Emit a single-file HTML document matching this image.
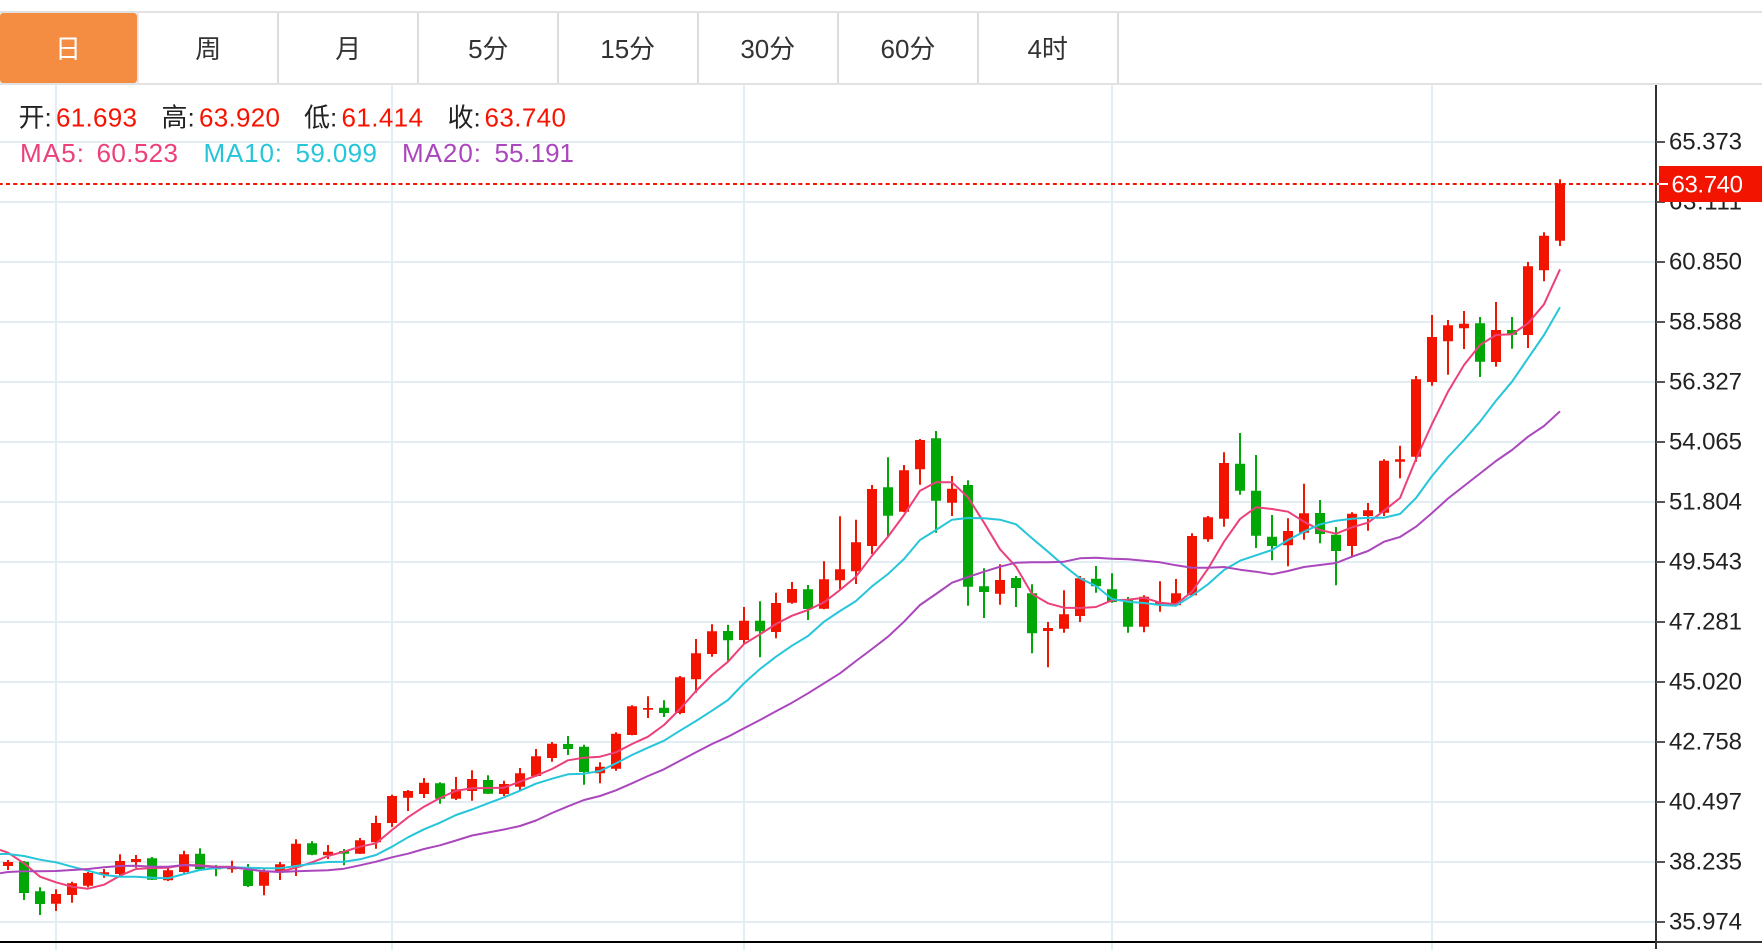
<!DOCTYPE html>
<html><head><meta charset="utf-8"><title>K线</title>
<style>
html,body{margin:0;padding:0;background:#fff;width:1762px;height:950px;overflow:hidden}
svg{display:block;font-family:"Liberation Sans","Noto Sans CJK SC",sans-serif}
</style></head><body>
<svg width="1762" height="950" viewBox="0 0 1762 950" xmlns="http://www.w3.org/2000/svg">
<rect width="1762" height="950" fill="#fff"/>
<!-- grid -->
<path fill="none" stroke="#E3EDF4" stroke-width="2" d="M0 142H1656M0 202H1656M0 262H1656M0 322H1656M0 382H1656M0 442H1656M0 502H1656M0 562H1656M0 622H1656M0 682H1656M0 742H1656M0 802H1656M0 862H1656M0 922H1656M56 85V950M392 85V950M744 85V950M1112 85V950M1432 85V950"/>
<!-- tabs -->
<rect x="0" y="11" width="1762" height="2" fill="#E2E2E2"/>
<rect x="0" y="83" width="1762" height="2" fill="#E2E2E2"/>
<rect x="137" y="13" width="2" height="70" fill="#E6E6E6"/>
<path fill="#DCDCDC" d="M277 13h2v70h-2zM417 13h2v70h-2zM557 13h2v70h-2zM697 13h2v70h-2zM837 13h2v70h-2zM977 13h2v70h-2zM1117 13h2v70h-2z"/>
<rect x="0" y="13" width="137" height="70" rx="3" fill="#F48C42"/>
<g font-size="26" text-anchor="middle" fill="#333">
<text x="68" y="58" fill="#fff">日</text>
<text x="208.300" y="58">周</text>
<text x="348.300" y="58">月</text>
<text x="488.300" y="58">5分</text>
<text x="627.700" y="58">15分</text>
<text x="767.800" y="58">30分</text>
<text x="908" y="58">60分</text>
<text x="1047.700" y="58">4时</text>
</g>
<!-- wicks red -->
<path fill="none" stroke="#F31400" stroke-width="2" d="M8 860V870M56 889.300V911M72 881.700V902.700M88 872V887.300M104 869V877.700M120 854.300V876M136 855V867.700M168 868.300V881M184 850.700V872.700M232 860.700V872.700M264 869.300V895.300M280 862V880M296 839.300V876M328 845V859M360 838V854M376 815.700V848.700M392 794.700V827M408 790V811M424 778V798M456 777V800M472 770.300V800.700M504 780.700V796M520 768V790M536 749V776.700M552 742V761.700M600 762.300V783.300M616 732.300V770.700M632 705.300V735.300M648 696.300V718M680 676V714.300M696 639V692.700M712 624.300V656.700M744 607V644M776 592.700V638.300M792 582V603.700M824 561.300V609.300M840 516.300V589.300M856 519.700V584M872 485V554M904 465V512.300M920 439V484.700M952 476V516M1000 564.300V604.700M1048 622V667.300M1064 590.300V632.700M1080 576V622M1144 595.300V632.300M1160 581.300V611.700M1176 579V606M1192 533.300V596M1208 516V541.700M1224 452.300V526.700M1288 518.300V566.300M1304 483.700V539.700M1352 512.300V556.700M1368 503V530.700M1384 459.300V516M1400 445.700V478.300M1416 376V461.700M1432 315V385.700M1448 320V374.700M1464 311V349M1496 302V366.700M1528 262V348M1544 232.300V281.300M1560 179.300V246"/>
<!-- wicks green -->
<path fill="none" stroke="#00A707" stroke-width="2" d="M24 861V900M40 887.300V915M152 857V880M200 848.300V870.700M216 865V876.300M248 864V887M312 841.300V855.300M344 849V865.300M440 782.300V803.700M488 775.300V794M568 736V755M584 744.700V784.700M664 700.300V717M728 624.700V660.700M760 601.300V657.300M808 585V620M888 457.300V537.300M936 431V532.700M968 480.300V605.700M984 568.300V618M1016 576V607M1032 584.300V653.300M1096 566V592.700M1112 573.300V602.700M1128 597V632.700M1240 433V494.700M1256 455V548M1272 515V560.300M1320 500V543.300M1336 527V585.300M1480 317V377M1512 317V348.700"/>
<!-- bodies red -->
<path fill="#F31400" d="M3 862h10v4h-10zM51 894h10v9.700h-10zM67 883.300h10v11.700h-10zM83 873h10v12.700h-10zM99 872.300h10v2.400h-10zM115 861h10v13h-10zM131 859h10v3h-10zM163 870.300h10v10h-10zM179 854.300h10v17.700h-10zM227 867.300h10v2h-10zM259 871h10v14.700h-10zM275 864.300h10v7.400h-10zM291 843.700h10v23.600h-10zM323 851.700h10v3.600h-10zM355 840.300h10v13.400h-10zM371 823h10v19.300h-10zM387 796h10v27h-10zM403 791h10v6.700h-10zM419 782.700h10v11.300h-10zM451 789.300h10v9.400h-10zM467 779h10v12h-10zM499 784h10v10h-10zM515 773.300h10v13.400h-10zM531 756.300h10v19.700h-10zM547 743.700h10v14.300h-10zM595 766.700h10v6.600h-10zM611 733.700h10v35h-10zM627 706.300h10v28.700h-10zM643 708h10v1.700h-10zM675 677.300h10v35.700h-10zM691 653.300h10v26h-10zM707 631.300h10v22.700h-10zM739 620.700h10v19.300h-10zM771 603h10v29h-10zM787 589h10v13.700h-10zM819 579.300h10v29.400h-10zM835 569.300h10v11h-10zM851 542.300h10v29h-10zM867 489h10v57h-10zM899 470.300h10v41.400h-10zM915 440h10v29.300h-10zM947 488.700h10v14h-10zM995 580h10v13.700h-10zM1043 628h10v3h-10zM1059 614.300h10v14.400h-10zM1075 578.300h10v37.700h-10zM1139 596.700h10v30h-10zM1155 602.300h10v2h-10zM1171 593.300h10v12h-10zM1187 536h10v59.300h-10zM1203 517.300h10v22h-10zM1219 463h10v55.700h-10zM1283 531h10v14.300h-10zM1299 513.300h10v19.400h-10zM1347 513.700h10v32.300h-10zM1363 510.300h10v5.700h-10zM1379 460.700h10v52h-10zM1395 459.300h10v2.400h-10zM1411 379.300h10v77.400h-10zM1427 337h10v45h-10zM1443 325.300h10v16h-10zM1459 323.700h10v4.600h-10zM1491 330h10v32h-10zM1523 266.300h10v68.700h-10zM1539 235.700h10v34.600h-10zM1555 183.700h10v57h-10z"/>
<!-- bodies green -->
<path fill="#00A707" d="M19 861.700h10v31.300h-10zM35 891.300h10v12.700h-10zM147 858.300h10v21.400h-10zM195 853.700h10v15.600h-10zM211 866h10v3.300h-10zM243 870h10v16h-10zM307 843.300h10v11.400h-10zM339 851h10v2.700h-10zM435 783.300h10v15.400h-10zM483 780h10v13.700h-10zM563 744h10v5h-10zM579 746.700h10v25.300h-10zM659 707.700h10v5.300h-10zM723 631h10v9.300h-10zM755 620.700h10v10.600h-10zM803 589.300h10v19.700h-10zM883 487.300h10v28.400h-10zM931 438.300h10v62.400h-10zM963 485h10v101.700h-10zM979 586.300h10v5.700h-10zM1011 578h10v10h-10zM1027 593.300h10v40h-10zM1091 578.700h10v7.600h-10zM1107 589.300h10v12.700h-10zM1123 600h10v26.700h-10zM1235 463.700h10v27h-10zM1251 490.700h10v45h-10zM1267 536.700h10v9.300h-10zM1315 513h10v21h-10zM1331 534.700h10v16.300h-10zM1475 323.300h10v38.400h-10zM1507 330h10v4.700h-10z"/>
<!-- MA lines -->
<polyline fill="none" stroke="#EC407A" stroke-width="2" stroke-linejoin="round" points="0,850 8,852.700 24,863.300 40,876.700 56,882.300 72,886.700 88,888.700 104,884.700 120,875.700 136,869 152,868 168,867.700 184,865 200,865.300 216,866.700 232,866.700 248,869.300 264,871.300 280,871.700 296,867.700 312,862.300 328,856 344,851.700 360,846.700 376,843.300 392,830 408,817.300 424,806.700 440,798 456,790.700 472,788.300 488,788 504,787.700 520,781.700 536,775.700 552,769 568,760.300 584,757.700 600,756.700 616,752.300 632,744 648,736.700 664,725 680,709 696,691 712,675 728,661.700 744,644 760,634.300 776,624 792,615.700 808,610 824,602.300 840,590 856,576.700 872,555.700 888,536.700 904,515 920,490.700 936,482.300 952,482.300 968,497.300 984,522.700 1000,549.300 1016,566.700 1032,594 1048,603.300 1064,607.700 1080,608 1096,607 1112,600.300 1128,599.700 1144,597.700 1160,602.700 1176,604.300 1192,591.700 1208,568.700 1224,541.700 1240,519 1256,507.300 1272,509 1288,511.700 1304,521.700 1320,530 1336,533.700 1352,527.300 1368,522.700 1384,510.700 1400,498 1416,459 1432,424 1448,391.700 1464,365 1480,345 1496,335 1512,334.300 1528,323.300 1544,304.300 1560,269.300"/>
<polyline fill="none" stroke="#26C6DA" stroke-width="2" stroke-linejoin="round" points="0,854 8,854 24,856 40,859.700 56,862.300 72,866.700 88,870.700 104,875 120,876.700 136,876.700 152,877.700 168,878.300 184,874 200,870 216,868 232,867.300 248,867.700 264,868.300 280,868.300 296,866 312,863.700 328,862 344,861.700 360,859.300 376,855 392,846.700 408,837.300 424,829.300 440,822.700 456,815 472,809.500 488,803.300 504,797.300 520,790.700 536,783.700 552,778.700 568,774.300 584,773.700 600,771 616,763.300 632,755 648,747.700 664,740.700 680,730.700 696,721 712,710.700 728,700 744,683.300 760,669 776,656.700 792,645.700 808,636 824,621.700 840,611 856,601 872,586.300 888,574 904,559 920,540 936,530 952,519.700 968,518 984,518.300 1000,519.700 1016,524.300 1032,538.300 1048,551.700 1064,565.700 1080,578.300 1096,586 1112,599 1128,601.700 1144,603 1160,605 1176,605.700 1192,595.700 1208,584.300 1224,570 1240,560.700 1256,555.300 1272,550 1288,540 1304,531.700 1320,524.300 1336,520.700 1352,518.700 1368,517.700 1384,517.700 1400,514 1416,498 1432,476 1448,457 1464,440 1480,421.700 1496,400.700 1512,381.700 1528,358.300 1544,335 1560,307.300"/>
<polyline fill="none" stroke="#AB47BC" stroke-width="2" stroke-linejoin="round" points="0,873.300 8,872 24,871.300 40,871.300 56,871 72,870 88,869 104,867.300 120,866 136,865.700 152,866.700 168,866.700 184,865 200,866 216,867.300 232,867.300 248,869.300 264,871.300 280,872 296,871.300 312,870.700 328,870.300 344,868.700 360,865.300 376,861.700 392,857.300 408,853.700 424,849 440,845.300 456,840.500 472,835.500 488,832.500 504,829.500 520,826 536,820.500 552,813 568,806.300 584,800 600,796 616,790.300 632,783.300 648,776 664,769.300 680,760.700 696,752.300 712,744 728,736.700 744,728.300 760,720 776,711.300 792,702.700 808,693.300 824,683.300 840,673.300 856,661 872,649 888,636.700 904,621.700 920,605 936,594 952,582.700 968,577 984,571.700 1000,566.700 1016,562.700 1032,562.300 1048,562.300 1064,561.700 1080,558.300 1096,557.700 1112,558.700 1128,559.300 1144,560.700 1160,562.300 1176,565.300 1192,567.700 1208,567.700 1224,567 1240,569.700 1256,571.700 1272,574.300 1288,571 1304,567 1320,565 1336,563 1352,556.700 1368,551 1384,541.700 1400,537 1416,526.700 1432,513 1448,498.500 1464,486 1480,473.500 1496,461 1512,450 1528,436.700 1544,426 1560,411.300"/>
<!-- axes -->
<rect x="0" y="941" width="1656" height="2" fill="#000"/>
<rect x="1656" y="941" width="106" height="2" fill="#333"/>
<rect x="1655" y="85" width="2" height="864" fill="#333"/>
<path fill="none" stroke="#555" stroke-width="2" d="M1656 142h9M1656 202h9M1656 262h9M1656 322h9M1656 382h9M1656 442h9M1656 502h9M1656 562h9M1656 622h9M1656 682h9M1656 742h9M1656 802h9M1656 862h9M1656 922h9"/>
<g font-size="24" fill="#222">
<text x="1669" y="149.500" textLength="73">65.373</text>
<text x="1669" y="209.500" textLength="73">63.111</text>
<text x="1669" y="269.500" textLength="73">60.850</text>
<text x="1669" y="329.500" textLength="73">58.588</text>
<text x="1669" y="389.500" textLength="73">56.327</text>
<text x="1669" y="449.500" textLength="73">54.065</text>
<text x="1669" y="509.500" textLength="73">51.804</text>
<text x="1669" y="569.500" textLength="73">49.543</text>
<text x="1669" y="629.500" textLength="73">47.281</text>
<text x="1669" y="689.500" textLength="73">45.020</text>
<text x="1669" y="749.500" textLength="73">42.758</text>
<text x="1669" y="809.500" textLength="73">40.497</text>
<text x="1669" y="869.500" textLength="73">38.235</text>
<text x="1669" y="929.500" textLength="73">35.974</text>
</g>
<!-- last price -->
<line x1="0" y1="184" x2="1659" y2="184" stroke="#F31400" stroke-width="2" stroke-dasharray="4 3.270" stroke-dashoffset="1.300"/>
<rect x="1659" y="166" width="103" height="36" fill="#F31400"/>
<rect x="1659" y="183" width="9" height="2" fill="#fff"/>
<text x="1671.500" y="192.500" font-size="24" fill="#fff" textLength="71.500">63.740</text>
<!-- legend -->
<g font-size="26" fill="#222">
<text x="18.500" y="126.500">开:</text><text x="161.500" y="126.500">高:</text><text x="304" y="126.500">低:</text><text x="447.500" y="126.500">收:</text>
</g>
<g font-size="26" fill="#F81300">
<text x="56" y="126.500" textLength="81">61.693</text><text x="199" y="126.500" textLength="81">63.920</text><text x="341.500" y="126.500" textLength="81.500">61.414</text><text x="484.500" y="126.500" textLength="81.500">63.740</text>
</g>
<g font-size="26">
<text x="20" y="162" fill="#EC407A" textLength="64">MA5:</text><text x="96.500" y="162" fill="#EC407A" textLength="81.500">60.523</text>
<text x="203.500" y="162" fill="#26C6DA" textLength="78.500">MA10:</text><text x="295.500" y="162" fill="#26C6DA" textLength="81.500">59.099</text>
<text x="402" y="162" fill="#AB47BC" textLength="79">MA20:</text><text x="494.500" y="162" fill="#AB47BC" textLength="79.500">55.191</text>
</g>
</svg>
</body></html>
